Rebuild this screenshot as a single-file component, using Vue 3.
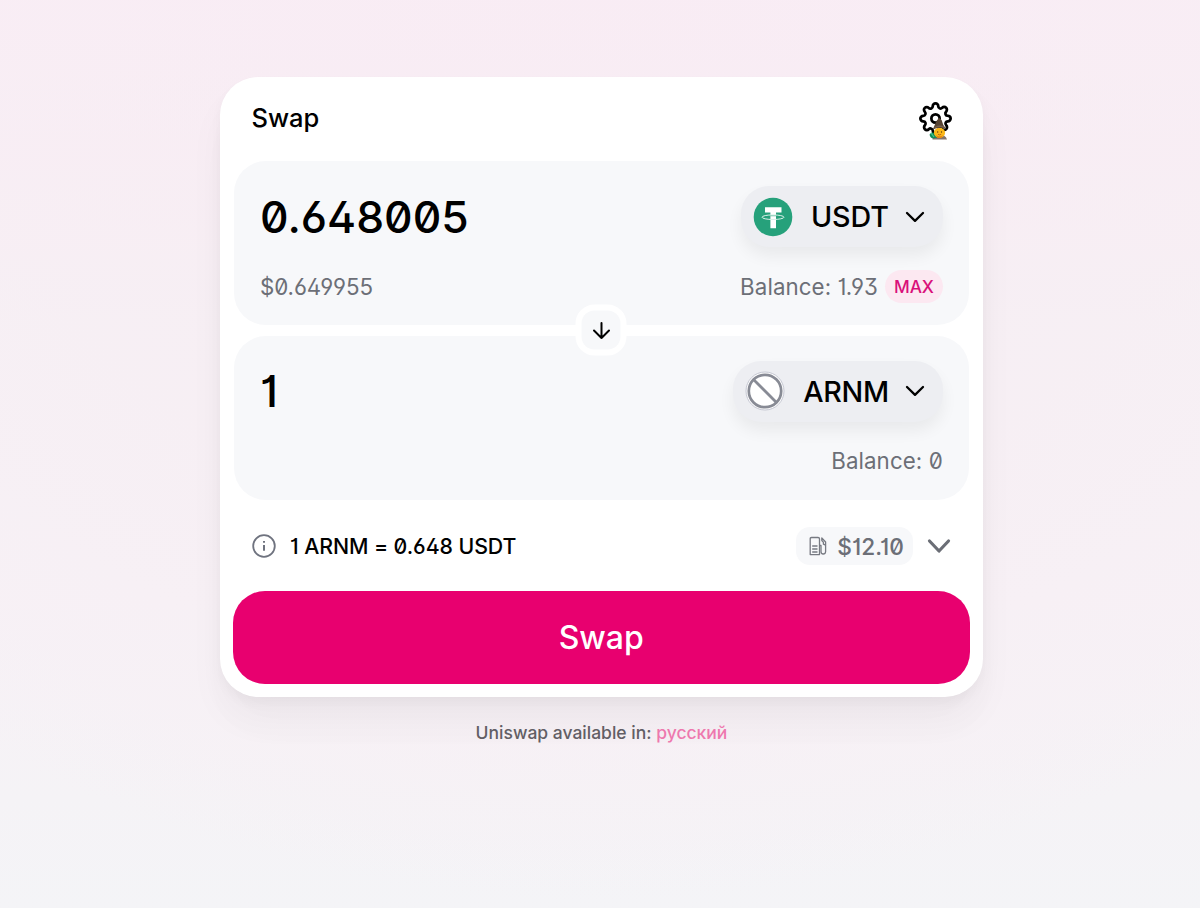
<script setup>
const rows = [
  { id: 'in', amount: '0.648005', fiat: '$0.649955', symbol: 'USDT', balance: '1.93', max: true },
  { id: 'out', amount: '1', fiat: '', symbol: 'ARNM', balance: '0', max: false },
]
</script>

<template>
  <main class="page">
    <section class="card">
      <header class="head">
        <h1 class="title">Swap</h1>
        <div class="settings">
          <svg class="gear" viewBox="0 0 24 24" fill="none" stroke="#000" stroke-width="2" stroke-linecap="round" stroke-linejoin="round">
            <circle cx="12" cy="12" r="3" />
            <path d="M19.4 15a1.65 1.65 0 0 0 .33 1.82l.06.06a2 2 0 0 1 0 2.83 2 2 0 0 1-2.83 0l-.06-.06a1.65 1.65 0 0 0-1.82-.33 1.65 1.65 0 0 0-1 1.51V21a2 2 0 0 1-2 2 2 2 0 0 1-2-2v-.09A1.65 1.65 0 0 0 9 19.4a1.65 1.65 0 0 0-1.82.33l-.06.06a2 2 0 0 1-2.83 0 2 2 0 0 1 0-2.83l.06-.06a1.65 1.65 0 0 0 .33-1.82 1.65 1.65 0 0 0-1.51-1H3a2 2 0 0 1-2-2 2 2 0 0 1 2-2h.09A1.65 1.65 0 0 0 4.6 9a1.65 1.65 0 0 0-.33-1.82l-.06-.06a2 2 0 0 1 0-2.83 2 2 0 0 1 2.83 0l.06.06a1.65 1.65 0 0 0 1.82.33H9a1.65 1.65 0 0 0 1-1.51V3a2 2 0 0 1 2-2 2 2 0 0 1 2 2v.09a1.65 1.65 0 0 0 1 1.51 1.65 1.65 0 0 0 1.82-.33l.06-.06a2 2 0 0 1 2.83 0 2 2 0 0 1 0 2.83l-.06.06a1.65 1.65 0 0 0-.33 1.82V9a1.65 1.65 0 0 0 1.51 1H21a2 2 0 0 1 2 2 2 2 0 0 1-2 2h-.09a1.65 1.65 0 0 0-1.51 1z" />
          </svg>
          <svg class="wizard" viewBox="0 0 20 23">
            <path d="M3.5 22.5Q3.5 17.5 10 17.5T18 22.5Z" fill="#85756b" />
            <path d="M.6 17.5Q2.5 14.5 5 16L8 20.5L4 21.5Q1 21 .6 17.5Z" fill="#128b58" />
            <path d="M2 15.8L5 20" stroke="#49c491" stroke-width="1.2" />
            <ellipse cx="10.5" cy="15.7" rx="5.6" ry="5" fill="#fbb818" />
            <path d="M6.8 18.3Q10.5 20 14.2 18.3L12.5 21H8.5Z" fill="#e58a12" />
            <circle cx="8.7" cy="15" r=".65" fill="#5f3b11" /><circle cx="12.5" cy="15" r=".65" fill="#5f3b11" />
            <path d="M9 17.3Q10.5 18.5 12.2 17.3" fill="none" stroke="#a84415" stroke-width=".7" />
            <path d="M3.8 12.6L7.2 4.5L10 .8L12.6 3L14.3 8L17.2 12Q10 9.4 3.8 12.6Z" fill="#574434" />
            <path d="M6 10Q10 7.5 15 9.5L15.8 11Q10 9 5.4 11.3Z" fill="#78604b" />
          </svg>
        </div>
      </header>

      <div class="panels">
        <div v-for="r in rows" :key="r.id" class="panel">
          <div class="line top">
            <span class="amount">{{ r.amount }}</span>
            <button class="token" :class="r.id">
              <svg v-if="r.id === 'in'" class="logo" viewBox="0 0 40 40">
                <circle cx="20" cy="20" r="19.3" fill="#26a17b" />
                <path d="M12 10.3H28.5V15.4H23V31.2H17.4V15.4H12Z" fill="#fff" />
                <ellipse cx="20" cy="20.2" rx="11" ry="2.3" fill="none" stroke="#d9f1e9" stroke-width="1" />
                <path d="M17.4 18.8H23" stroke="#26a17b" stroke-width=".6" />
              </svg>
              <svg v-else class="logo" viewBox="0 0 40 40" fill="none">
                <circle cx="20" cy="20" r="19" fill="#fff" stroke="#c5c7d2" stroke-width="1" />
                <circle cx="20" cy="20" r="16.2" stroke="#888b95" stroke-width="2.7" />
                <path d="M8.5 8.5L31.5 31.5" stroke="#888b95" stroke-width="2.7" />
              </svg>
              <span class="symbol">{{ r.symbol }}</span>
              <svg class="caret" viewBox="0 0 20 12" fill="none" stroke="#000" stroke-width="2.3" stroke-linecap="round" stroke-linejoin="round"><path d="M2 2L10 9.9L18 2" /></svg>
            </button>
          </div>
          <div class="line sub">
            <span class="fiat">{{ r.fiat }}</span>
            <div class="bal"><span class="baltext">Balance: {{ r.balance }}</span><button v-if="r.max" class="max">MAX</button></div>
          </div>
        </div>
        <div class="flip">
          <svg viewBox="0 0 24 24" fill="none" stroke="#000" stroke-width="2" stroke-linecap="round" stroke-linejoin="round"><path d="M12 4.5V19.5M4.5 12L12 19.5L19.5 12" /></svg>
        </div>
      </div>

      <div class="rate">
        <svg class="info" viewBox="0 0 24 24" fill="none" stroke="#6f737f" stroke-width="1.8"><circle cx="12" cy="12" r="10.8" /><path d="M12 11V16.8" stroke-width="2" /><path d="M12 7.1V8.8" stroke-width="2" /></svg>
        <span class="price">1 ARNM = 0.648 USDT</span>
        <span class="gas">
          <svg viewBox="0 0 20 20" fill="none" stroke="#777a82" stroke-width="1.3" stroke-linejoin="round"><path d="M2.2 18.6V2.8Q2.2 1.5 3.5 1.5H10Q11.5 1.5 11.5 2.8V18.6ZM4.2 10H9.5M4.2 13H9.5M4.2 16H9.5" /><path d="M11.5 9.5H13V15.5Q13 18 15.2 18T17.6 15.7V6L13.8 2V4.5L15.4 6.2V8.2L17.6 9.2" /></svg>
          <span>$12.10</span>
        </span>
        <svg class="expand" viewBox="0 0 24 16" fill="none" stroke="#6b6e76" stroke-width="3.2" stroke-linecap="round" stroke-linejoin="round"><path d="M2.5 3L12 13L21.5 3" /></svg>
      </div>
      <button class="swap">Swap</button>
    </section>
    <p class="lang">Uniswap available in: <a>русский</a></p>
  </main>
</template>

<style>
body { margin: 0; }
</style>
<style scoped>
.page {
  box-sizing: border-box; height: 908px; padding-top: 76.5px; overflow: hidden;
  font-family: Inter, "Liberation Sans", sans-serif; font-weight: 500; color: #000;
  font-feature-settings: 'ss01' on, 'zero' on, 'cv01' on, 'cv03' on;
  background:
    radial-gradient(ellipse 1100px 900px at 50% 0, rgba(247,236,242,.65) 0%, rgba(247,238,243,.65) 60%, rgba(247,240,245,.6) 85%, rgba(246,242,246,0) 100%),
    linear-gradient(#fbecf8 0, #f9edf6 140px, #f6f1f6 320px, #f7f1f6 600px, #f5f3f6 800px, #f4f4f7 100%);
}
button { font: inherit; font-feature-settings: inherit; border: 0; padding: 0; margin: 0; }
svg { display: block; flex: none; }
.card {
  box-sizing: border-box; width: 763.4px; height: 620px; margin: 0 0 0 219.5px;
  padding: 0 13px; border-radius: 38px; background: #fff;
  box-shadow: 0 0 2px rgba(0,0,0,.01), 0 6px 12px rgba(0,0,0,.035), 0 24px 38px rgba(0,0,0,.035), 0 34px 50px rgba(0,0,0,.01);
}
.head { box-sizing: border-box; display: flex; justify-content: space-between; align-items: center; height: 84.5px; padding: 0 18px 1px 19px; }
.title { margin: 0; font-size: 25.5px; font-weight: 500; line-height: 32px; }
.settings { position: relative; width: 33px; height: 33px; }
.gear { width: 33px; height: 33px; }
.wizard { position: absolute; left: 10px; top: 15px; width: 20px; height: 23px; }
.panels { position: relative; display: flex; flex-direction: column; gap: 11px; padding: 0 1px; }
.panel { box-sizing: border-box; height: 163.8px; padding: 24.5px 26px 0 26.5px; border-radius: 32px; background: #f7f8fa; }
.line { display: flex; justify-content: space-between; align-items: center; }
.top { height: 62px; }
.amount { font-size: 44.3px; }
.token { display: flex; align-items: center; height: 61px; padding: 0 18px 0 12px; border-radius: 28px; background: #edeef2; box-shadow: 0 9px 16px rgba(0,0,0,.06); }
.logo { width: 40px; height: 40px; }
.symbol { margin: 0 16px 0 18px; font-size: 28.7px; }
.out .symbol { letter-spacing: -.3px; }
.in .symbol { margin-left: 17.5px; letter-spacing: -.1px; }
.caret { width: 20px; height: 12px; }
.sub { height: 34px; margin-top: 21.7px; font-size: 22.3px; font-weight: 400; color: #6c6f77; }
.fiat { letter-spacing: -.1px; }
.baltext { letter-spacing: .1px; }
.bal { display: flex; align-items: center; gap: 7px; }
.max { height: 33px; padding: 0 9px; border-radius: 19px; background: #fce8f1; color: #d9107a; font-size: 17.3px; letter-spacing: -.1px; font-weight: 500; }
.flip { position: absolute; left: 50%; top: 50%; box-sizing: border-box; width: 51px; height: 51px; transform: translate(-50%,-50%); border: 6.5px solid #fff; border-radius: 19px; background: #f7f8fa; display: grid; place-items: center; }
.flip svg { width: 24px; height: 24px; }
.rate { box-sizing: border-box; display: flex; align-items: center; height: 91.4px; padding: 1.6px 19px 0 19.5px; }
.info { width: 24px; height: 24px; }
.price { margin-left: 14px; font-size: 21.3px; letter-spacing: -.08px; }
.gas { display: flex; align-items: center; gap: 9px; box-sizing: border-box; height: 38px; margin-left: auto; padding: 0 9px 0 12px; border-radius: 14px; background: #f7f8fa; color: #6c6f77; font-size: 22.7px; }
.gas svg { width: 20px; height: 20px; }
.expand { width: 24px; height: 16px; margin-left: 14px; }
.swap { display: block; width: 100%; height: 93px; border-radius: 32px; background: #e8006f; color: #fff; font-size: 32px; font-weight: 500; }
.lang { margin: 24.5px 0 0 3px; text-align: center; font-size: 17.5px; line-height: 24px; color: #625e65; }
.lang a { color: #ee78ae; }
</style>
